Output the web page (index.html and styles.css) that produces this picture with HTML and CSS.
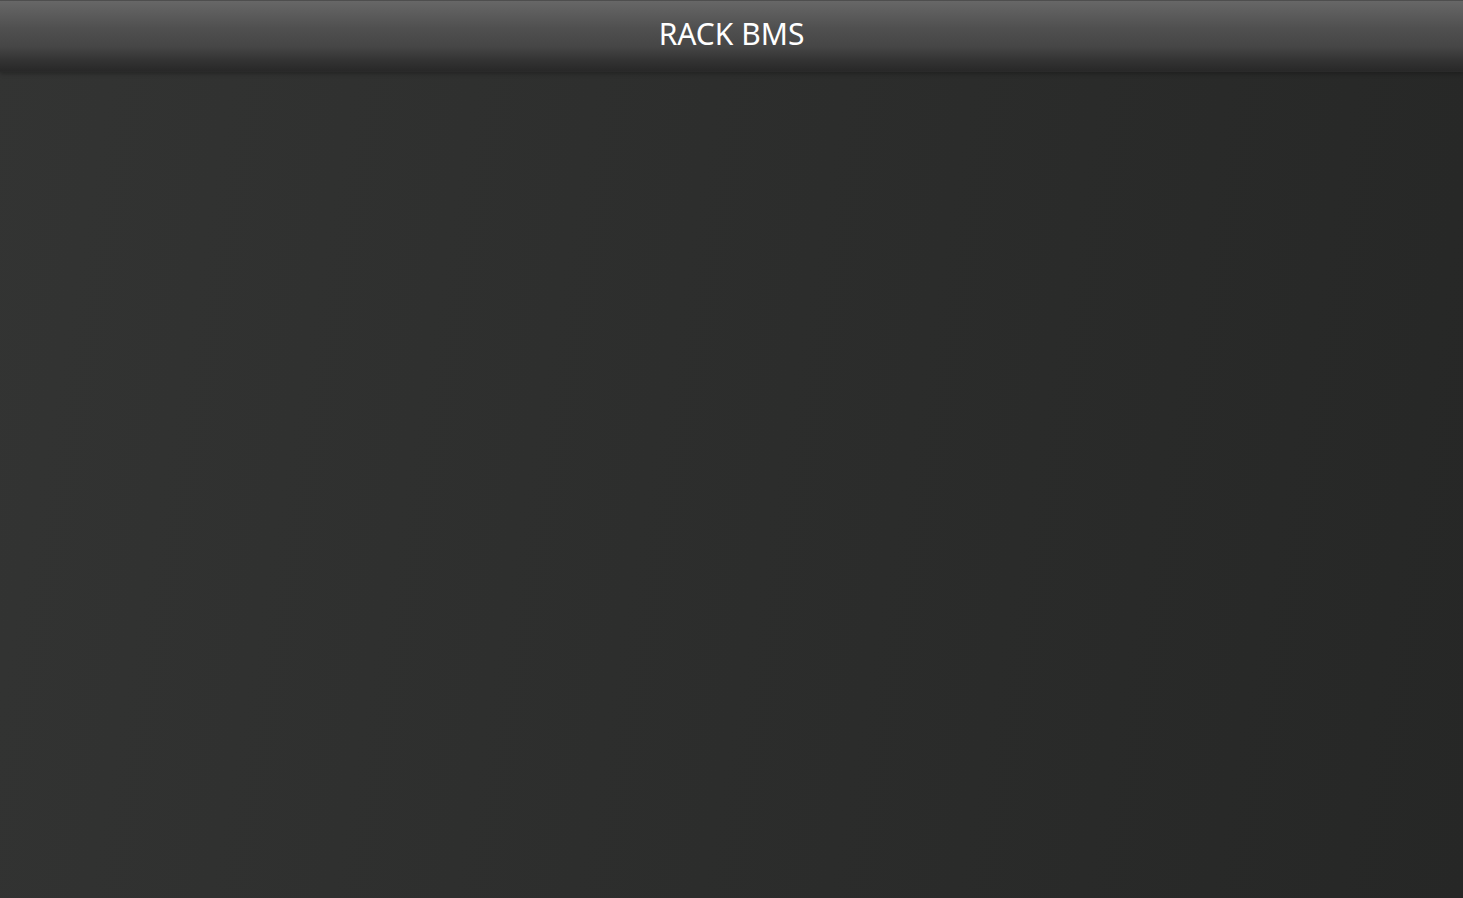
FILE: index.html
```html
<!DOCTYPE html>
<html>
<head>
<meta charset="utf-8">
<title>RACK BMS</title>
<link rel="stylesheet" href="styles.css">
</head>
<body>
<header class="topbar"><h1 class="title">RACK BMS</h1></header>
<main class="content"></main>
</body>
</html>
```
FILE: styles.css
```css
html, body {
  margin: 0;
  padding: 0;
  height: 100%;
}
body {
  background: linear-gradient(100deg, #333433 0%, #2d2e2d 45%, #262726 100%);
  font-family: "Noto Sans", "Open Sans", sans-serif;
  display: flex;
  flex-direction: column;
  overflow: hidden;
}
.topbar {
  height: 70px;
  flex: none;
  border-top: 1px solid #4e4e4e;
  border-bottom: 1px solid #2a2a2a;
  background: linear-gradient(180deg, #676767 0%, #5e5e5e 15%, #4f4f4f 40%, #464646 65%, #333333 85%, #282828 100%);
  box-shadow: 0 2px 4px rgba(0,0,0,0.25);
  display: flex;
  align-items: center;
  justify-content: center;
  position: relative;
  z-index: 1;
}
.title {
  margin: 0;
  color: #ffffff;
  font-weight: 400;
  font-size: 30px;
  line-height: 1;
  padding-bottom: 4px;
}
.content {
  flex: 1;
}
```
